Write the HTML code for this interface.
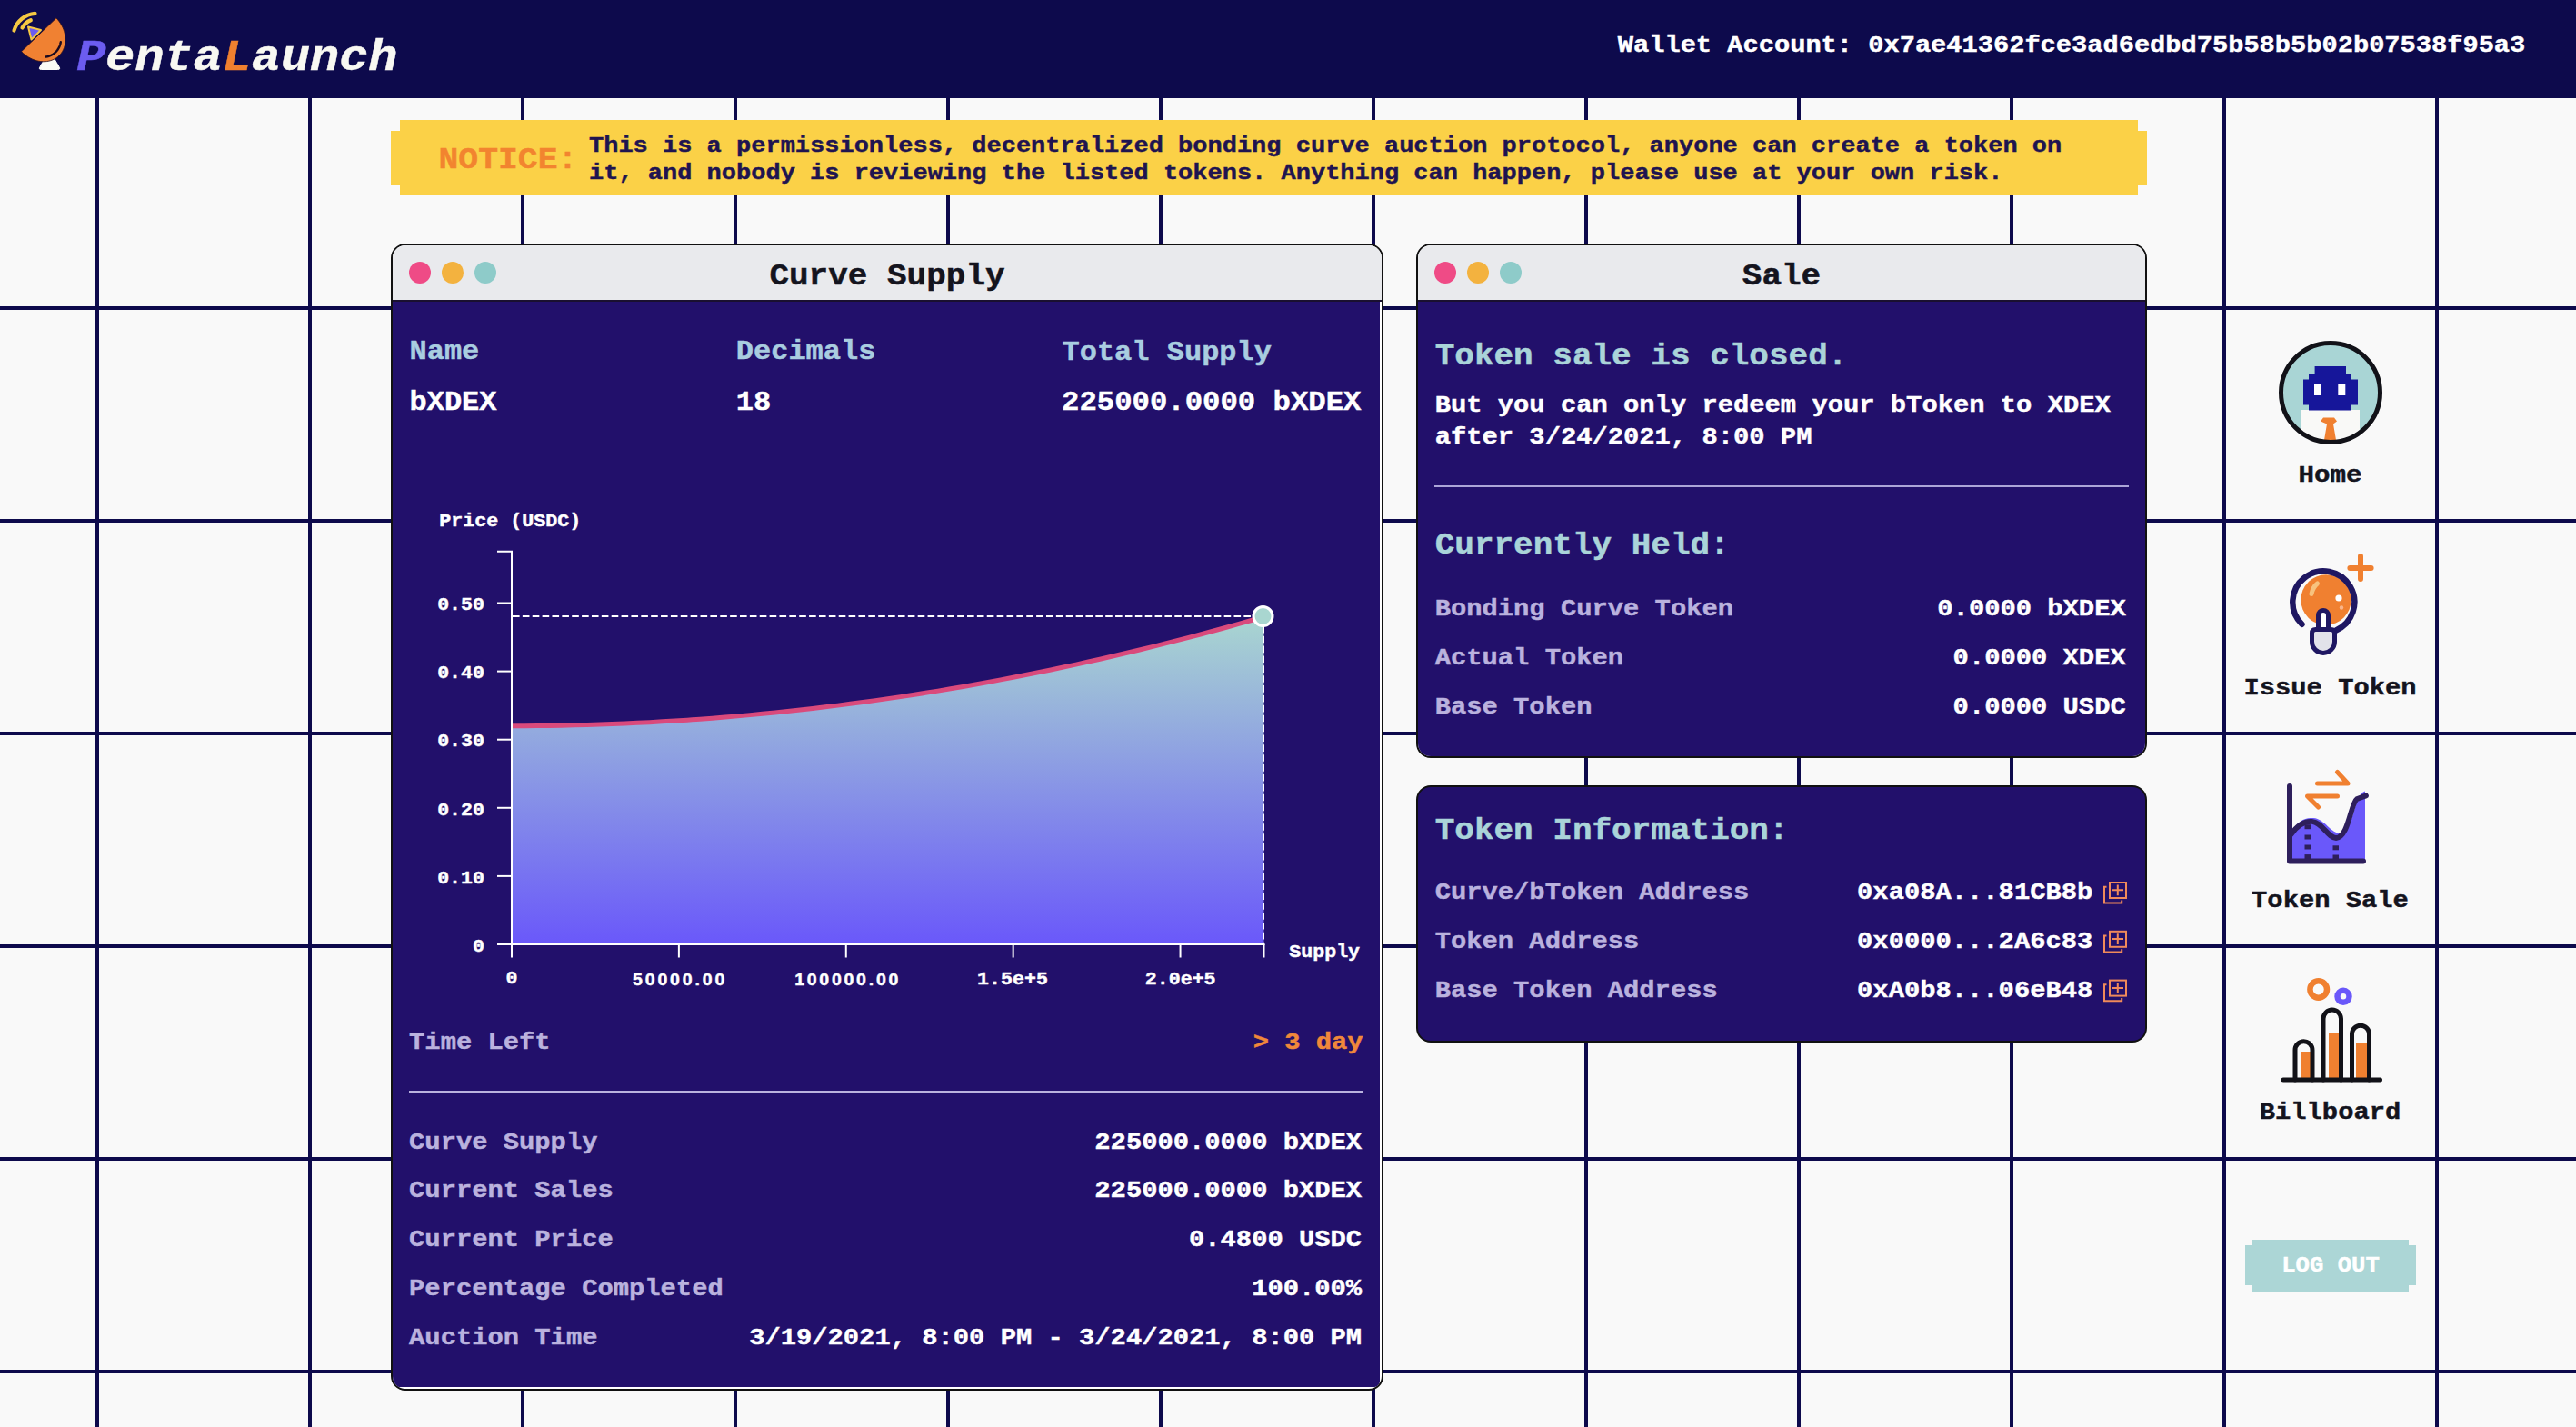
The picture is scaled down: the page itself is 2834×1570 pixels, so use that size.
<!DOCTYPE html>
<html><head><meta charset="utf-8"><style>
html,body{margin:0;padding:0;}
body{width:2834px;height:1570px;overflow:hidden;position:relative;background-color:#f9f9f9;
background-image:linear-gradient(to right,#0d0a4c 4px,transparent 4px),linear-gradient(to bottom,#0d0a4c 4px,transparent 4px);
background-size:234px 234px;background-position:105px 103px;font-family:"Liberation Mono", monospace;}
.t{position:absolute;white-space:pre;line-height:1;transform:scaleY(0.9);transform-origin:0 0.766em;-webkit-text-stroke:0.5px currentColor;}
</style></head><body>
<div style='position:absolute;left:0px;top:0px;width:2834px;height:108px;background:#0d0a4c;'></div><div style='position:absolute;left:440px;top:132px;width:1912px;height:82px;background:#fbd147;'></div><div style='position:absolute;left:430px;top:144px;width:10px;height:60px;background:#fbd147;'></div><div style='position:absolute;left:2352px;top:144px;width:10px;height:60px;background:#fbd147;'></div><div class=t style='top:157.52px;font-size:36.4px;color:#f2842f;font-weight:bold;left:482.50px;'>NOTICE:</div><div class=t style='top:147.02px;font-size:27px;color:#1f1450;font-weight:bold;left:648.00px;'>This is a permissionless, decentralized bonding curve auction protocol, anyone can create a token on</div><div class=t style='top:177.12px;font-size:27px;color:#1f1450;font-weight:bold;left:648.00px;'>it, and nobody is reviewing the listed tokens. Anything can happen, please use at your own risk.</div><div class=t style='top:35.72px;font-size:53.5px;color:#f8f8f2;font-weight:bold;font-style:italic;left:84.20px;'><span style='color:#6c5cf0'>P</span>enta<span style='color:#f0802f'>L</span>aunch</div><div class=t style='top:35.62px;font-size:28.7px;color:#ffffff;font-weight:bold;left:1779.80px;'>Wallet Account: 0x7ae41362fce3ad6edbd75b58b5b02b07538f95a3</div><div style='position:absolute;left:430px;top:268px;width:1092px;height:1262px;box-sizing:border-box;border:2px solid #111;border-radius:16px;background:#fff;overflow:hidden'><div style='position:absolute;left:0;top:0;right:0;height:60px;background:#e9eaed;border-bottom:2px solid #1a1030'></div><div style='position:absolute;left:0;top:62px;right:2px;bottom:2px;background:#22106b;border-radius:0 0 6px 0'></div></div><div style='position:absolute;left:450px;top:288px;width:24px;height:24px;border-radius:50%;background:#ef4b86'></div><div style='position:absolute;left:486px;top:288px;width:24px;height:24px;border-radius:50%;background:#f3b23f'></div><div style='position:absolute;left:522px;top:288px;width:24px;height:24px;border-radius:50%;background:#8ecbc9'></div><div class=t style='top:285.92px;font-size:36px;color:#14141e;font-weight:bold;left:-24.00px;width:2000px;text-align:center;'>Curve Supply</div><div style='position:absolute;left:1558px;top:268px;width:804px;height:566px;box-sizing:border-box;border:2px solid #111;border-radius:16px;background:#fff;overflow:hidden'><div style='position:absolute;left:0;top:0;right:0;height:60px;background:#e9eaed;border-bottom:2px solid #1a1030'></div><div style='position:absolute;left:0;top:62px;right:0px;bottom:0px;background:#22106b;border-radius:0 0 0px 0'></div></div><div style='position:absolute;left:1578px;top:288px;width:24px;height:24px;border-radius:50%;background:#ef4b86'></div><div style='position:absolute;left:1614px;top:288px;width:24px;height:24px;border-radius:50%;background:#f3b23f'></div><div style='position:absolute;left:1650px;top:288px;width:24px;height:24px;border-radius:50%;background:#8ecbc9'></div><div class=t style='top:285.92px;font-size:36px;color:#14141e;font-weight:bold;left:960.00px;width:2000px;text-align:center;'>Sale</div><div style='position:absolute;left:1558px;top:864px;width:804px;height:283px;box-sizing:border-box;border:2px solid #111;border-radius:16px;background:#22106b'></div><div class=t style='top:371.49px;font-size:32px;color:#a9cde0;font-weight:bold;left:450.50px;'>Name</div><div class=t style='top:371.49px;font-size:32px;color:#a9cde0;font-weight:bold;left:809.80px;'>Decimals</div><div class=t style='top:371.99px;font-size:32px;color:#a9cde0;font-weight:bold;left:1168.50px;'>Total Supply</div><div class=t style='top:427.39px;font-size:32px;color:#ffffff;font-weight:bold;left:450.50px;'>bXDEX</div><div class=t style='top:427.39px;font-size:32px;color:#ffffff;font-weight:bold;left:809.80px;'>18</div><div class=t style='top:427.16px;font-size:32.3px;color:#ffffff;font-weight:bold;right:1336.50px;'>225000.0000 bXDEX</div><div class=t style='top:1132.54px;font-size:28.8px;color:#bab2de;font-weight:bold;left:450.10px;'>Time Left</div><div class=t style='top:1132.54px;font-size:28.8px;color:#f0883a;font-weight:bold;right:1334.40px;'>&gt; 3 day</div><div style='position:absolute;left:450px;top:1199.5px;width:1050px;height:2px;background:#bab2de;'></div><div class=t style='top:1242.54px;font-size:28.8px;color:#bab2de;font-weight:bold;left:450.10px;'>Curve Supply</div><div class=t style='top:1242.54px;font-size:28.8px;color:#ffffff;font-weight:bold;right:1335.90px;'>225000.0000 bXDEX</div><div class=t style='top:1296.39px;font-size:28.8px;color:#bab2de;font-weight:bold;left:450.10px;'>Current Sales</div><div class=t style='top:1296.39px;font-size:28.8px;color:#ffffff;font-weight:bold;right:1335.90px;'>225000.0000 bXDEX</div><div class=t style='top:1350.24px;font-size:28.8px;color:#bab2de;font-weight:bold;left:450.10px;'>Current Price</div><div class=t style='top:1350.24px;font-size:28.8px;color:#ffffff;font-weight:bold;right:1335.90px;'>0.4800 USDC</div><div class=t style='top:1404.09px;font-size:28.8px;color:#bab2de;font-weight:bold;left:450.10px;'>Percentage Completed</div><div class=t style='top:1404.09px;font-size:28.8px;color:#ffffff;font-weight:bold;right:1335.90px;'>100.00%</div><div class=t style='top:1457.94px;font-size:28.8px;color:#bab2de;font-weight:bold;left:450.10px;'>Auction Time</div><div class=t style='top:1457.94px;font-size:28.8px;color:#ffffff;font-weight:bold;right:1335.90px;'>3/19/2021, 8:00 PM - 3/24/2021, 8:00 PM</div><div class=t style='top:374.12px;font-size:36px;color:#aad4d9;font-weight:bold;left:1578.70px;'>Token sale is closed.</div><div class=t style='top:431.54px;font-size:28.8px;color:#ffffff;font-weight:bold;left:1578.70px;'>But you can only redeem your bToken to XDEX</div><div class=t style='top:467.24px;font-size:28.8px;color:#ffffff;font-weight:bold;left:1578.70px;'>after 3/24/2021, 8:00 PM</div><div style='position:absolute;left:1578px;top:533.5px;width:764px;height:2px;background:#aca5d8;'></div><div class=t style='top:581.72px;font-size:36px;color:#aad4d9;font-weight:bold;left:1578.70px;'>Currently Held:</div><div class=t style='top:656.34px;font-size:28.8px;color:#bab2de;font-weight:bold;left:1578.70px;'>Bonding Curve Token</div><div class=t style='top:656.34px;font-size:28.8px;color:#ffffff;font-weight:bold;right:495.30px;'>0.0000 bXDEX</div><div class=t style='top:710.14px;font-size:28.8px;color:#bab2de;font-weight:bold;left:1578.70px;'>Actual Token</div><div class=t style='top:710.14px;font-size:28.8px;color:#ffffff;font-weight:bold;right:495.30px;'>0.0000 XDEX</div><div class=t style='top:763.94px;font-size:28.8px;color:#bab2de;font-weight:bold;left:1578.70px;'>Base Token</div><div class=t style='top:763.94px;font-size:28.8px;color:#ffffff;font-weight:bold;right:495.30px;'>0.0000 USDC</div><div class=t style='top:896.32px;font-size:36px;color:#aad4d9;font-weight:bold;left:1578.70px;'>Token Information:</div><div class=t style='top:967.94px;font-size:28.8px;color:#bab2de;font-weight:bold;left:1578.70px;'>Curve/bToken Address</div><div class=t style='top:967.94px;font-size:28.8px;color:#ffffff;font-weight:bold;right:531.70px;'>0xa08A...81CB8b</div><div class=t style='top:1021.74px;font-size:28.8px;color:#bab2de;font-weight:bold;left:1578.70px;'>Token Address</div><div class=t style='top:1021.74px;font-size:28.8px;color:#ffffff;font-weight:bold;right:531.70px;'>0x0000...2A6c83</div><div class=t style='top:1075.54px;font-size:28.8px;color:#bab2de;font-weight:bold;left:1578.70px;'>Base Token Address</div><div class=t style='top:1075.54px;font-size:28.8px;color:#ffffff;font-weight:bold;right:531.70px;'>0xA0b8...06eB48</div><div class=t style='top:507.83px;font-size:29.2px;color:#14141e;font-weight:bold;left:1563.50px;width:2000px;text-align:center;'>Home</div><div class=t style='top:742.54px;font-size:28.8px;color:#14141e;font-weight:bold;left:1563.50px;width:2000px;text-align:center;'>Issue Token</div><div class=t style='top:976.74px;font-size:28.8px;color:#14141e;font-weight:bold;left:1563.50px;width:2000px;text-align:center;'>Token Sale</div><div class=t style='top:1210.44px;font-size:28.8px;color:#14141e;font-weight:bold;left:1563.50px;width:2000px;text-align:center;'>Billboard</div><div style='position:absolute;left:2478px;top:1364px;width:172px;height:58px;background:#acd6d6;'></div><div style='position:absolute;left:2470px;top:1370px;width:188px;height:44px;background:#acd6d6;'></div><div class=t style='top:1380.39px;font-size:25.6px;color:#ffffff;font-weight:bold;left:1564.00px;width:2000px;text-align:center;'>LOG OUT</div><svg style="position:absolute;left:0;top:0" width="2834" height="1570" viewBox="0 0 2834 1570"><defs><linearGradient id="ag" x1="0" y1="0" x2="0" y2="1"><stop offset="0" stop-color="#a9d6d0"/><stop offset="1" stop-color="#6a58fa"/></linearGradient></defs><path d="M563.00,798.68 L576.79,798.65 L590.58,798.55 L604.38,798.38 L618.17,798.15 L631.96,797.85 L645.75,797.48 L659.54,797.04 L673.33,796.54 L687.12,795.98 L700.92,795.34 L714.71,794.64 L728.50,793.87 L742.29,793.04 L756.08,792.14 L769.88,791.17 L783.67,790.14 L797.46,789.03 L811.25,787.87 L825.04,786.63 L838.83,785.33 L852.62,783.96 L866.42,782.53 L880.21,781.02 L894.00,779.45 L907.79,777.82 L921.58,776.12 L935.38,774.35 L949.17,772.51 L962.96,770.61 L976.75,768.64 L990.54,766.60 L1004.33,764.50 L1018.12,762.33 L1031.92,760.10 L1045.71,757.79 L1059.50,755.42 L1073.29,752.99 L1087.08,750.48 L1100.88,747.91 L1114.67,745.28 L1128.46,742.57 L1142.25,739.80 L1156.04,736.96 L1169.83,734.06 L1183.62,731.09 L1197.42,728.05 L1211.21,724.95 L1225.00,721.78 L1238.79,718.54 L1252.58,715.24 L1266.38,711.86 L1280.17,708.43 L1293.96,704.92 L1307.75,701.35 L1321.54,697.71 L1335.33,694.01 L1349.12,690.24 L1362.92,686.40 L1376.71,682.49 L1390.50,678.52 L1390.50,1039 L563,1039 Z" fill="url(#ag)"/><path d="M563.00,798.68 L576.79,798.65 L590.58,798.55 L604.38,798.38 L618.17,798.15 L631.96,797.85 L645.75,797.48 L659.54,797.04 L673.33,796.54 L687.12,795.98 L700.92,795.34 L714.71,794.64 L728.50,793.87 L742.29,793.04 L756.08,792.14 L769.88,791.17 L783.67,790.14 L797.46,789.03 L811.25,787.87 L825.04,786.63 L838.83,785.33 L852.62,783.96 L866.42,782.53 L880.21,781.02 L894.00,779.45 L907.79,777.82 L921.58,776.12 L935.38,774.35 L949.17,772.51 L962.96,770.61 L976.75,768.64 L990.54,766.60 L1004.33,764.50 L1018.12,762.33 L1031.92,760.10 L1045.71,757.79 L1059.50,755.42 L1073.29,752.99 L1087.08,750.48 L1100.88,747.91 L1114.67,745.28 L1128.46,742.57 L1142.25,739.80 L1156.04,736.96 L1169.83,734.06 L1183.62,731.09 L1197.42,728.05 L1211.21,724.95 L1225.00,721.78 L1238.79,718.54 L1252.58,715.24 L1266.38,711.86 L1280.17,708.43 L1293.96,704.92 L1307.75,701.35 L1321.54,697.71 L1335.33,694.01 L1349.12,690.24 L1362.92,686.40 L1376.71,682.49 L1390.50,678.52" fill="none" stroke="#d94a7c" stroke-width="5"/><line x1="564" y1="678" x2="1390" y2="678" stroke="#fff" stroke-width="2" stroke-dasharray="7.6 3.27"/><line x1="1390" y1="678" x2="1390" y2="1039" stroke="#fff" stroke-width="2" stroke-dasharray="7.6 3.27"/><path d="M547,606.8 H563 V1039 M547,1039 H1391.5" fill="none" stroke="#fff" stroke-width="2"/><line x1="547" y1="663.50" x2="563" y2="663.50" stroke="#fff" stroke-width="2"/><line x1="547" y1="738.60" x2="563" y2="738.60" stroke="#fff" stroke-width="2"/><line x1="547" y1="813.70" x2="563" y2="813.70" stroke="#fff" stroke-width="2"/><line x1="547" y1="888.80" x2="563" y2="888.80" stroke="#fff" stroke-width="2"/><line x1="547" y1="963.90" x2="563" y2="963.90" stroke="#fff" stroke-width="2"/><line x1="563.00" y1="1039" x2="563.00" y2="1053.5" stroke="#fff" stroke-width="2"/><line x1="746.89" y1="1039" x2="746.89" y2="1053.5" stroke="#fff" stroke-width="2"/><line x1="930.78" y1="1039" x2="930.78" y2="1053.5" stroke="#fff" stroke-width="2"/><line x1="1114.67" y1="1039" x2="1114.67" y2="1053.5" stroke="#fff" stroke-width="2"/><line x1="1298.56" y1="1039" x2="1298.56" y2="1053.5" stroke="#fff" stroke-width="2"/><line x1="1390.50" y1="1039" x2="1390.50" y2="1053.5" stroke="#fff" stroke-width="2"/><circle cx="1389.5" cy="678" r="10.5" fill="#a9d6d0" stroke="#fff" stroke-width="3"/><g fill="none" stroke="#f5c842" stroke-width="4.2" stroke-linecap="round"><path d="M15.5,33.5 A26,26 0 0 1 38.5,14.8"/><path d="M24.5,30.5 A18,18 0 0 1 33.8,22.2"/></g><path d="M31,29.5 L45,33 L34.5,43.5 Z" fill="#6c5cf0" stroke="#f5c842" stroke-width="2" stroke-linejoin="round"/><path d="M57,60 L65,73.5 Q67,76.5 63.5,76.5 L45.5,76.5 Q42,76.5 44,73.5 L52,60 Z" fill="#fbfbf5" stroke="#fbfbf5" stroke-width="1" stroke-linejoin="round"/><path d="M61.94,19.85 L63.62,21.71 L65.17,23.68 L66.58,25.74 L67.84,27.88 L68.95,30.08 L69.90,32.33 L70.68,34.62 L71.29,36.93 L71.72,39.25 L71.97,41.56 L72.05,43.85 L71.94,46.11 L71.65,48.32 L71.19,50.46 L70.55,52.53 L69.74,54.52 L68.76,56.40 L67.62,58.17 L66.33,59.82 L64.89,61.33 L63.32,62.71 L61.62,63.93 L59.80,64.99 L57.88,65.89 L55.86,66.62 L53.77,67.17 L51.60,67.55 L49.38,67.74 L47.12,67.76 L44.84,67.59 L42.54,67.24 L40.24,66.71 L37.96,66.00 L35.70,65.13 L33.49,64.09 L31.34,62.89 L29.26,61.54 L27.26,60.04 L25.36,58.41 L23.56,56.65 Z" fill="#f08132" stroke="#2a1020" stroke-width="0.8" stroke-linejoin="round"/><path d="M66.82,46.12 L66.59,47.38 L66.29,48.62 L65.92,49.82 L65.48,50.99 L64.97,52.13 L64.39,53.21 L63.75,54.26 L63.05,55.25 L62.28,56.20 L61.45,57.09 L60.57,57.92 L59.63,58.70 L58.65,59.41 L57.61,60.05 L56.53,60.64 L55.41,61.15 L54.25,61.59 L53.05,61.97 L51.83,62.27 L50.57,62.50" fill="none" stroke="#1a0a20" stroke-width="2.4" stroke-linecap="round"/><g fill="none" stroke="#f08a5a" stroke-width="2" transform="translate(0,0.00)"><rect x="2321" y="971" width="18" height="17"/><path d="M2323.5,979.3 H2336 M2329.8,973.5 V985.3"/><path d="M2317.5,975.7 H2315 V993.6 H2334.2 V990.5"/></g><g fill="none" stroke="#f08a5a" stroke-width="2" transform="translate(0,53.80)"><rect x="2321" y="971" width="18" height="17"/><path d="M2323.5,979.3 H2336 M2329.8,973.5 V985.3"/><path d="M2317.5,975.7 H2315 V993.6 H2334.2 V990.5"/></g><g fill="none" stroke="#f08a5a" stroke-width="2" transform="translate(0,107.60)"><rect x="2321" y="971" width="18" height="17"/><path d="M2323.5,979.3 H2336 M2329.8,973.5 V985.3"/><path d="M2317.5,975.7 H2315 V993.6 H2334.2 V990.5"/></g><defs><clipPath id="hc"><circle cx="2564" cy="432" r="53"/></clipPath></defs><circle cx="2564" cy="432" r="54.5" fill="#a9d5d5"/><g clip-path="url(#hc)"><rect x="2532" y="451" width="64" height="45" fill="#f9f9f7"/><path d="M2546.6,403 H2581 V411 H2587 V417.4 H2594 V445.6 H2587 V451.5 H2540 V445.6 H2534 V417.4 H2540 V411 H2546.6 Z" fill="#16169a"/><rect x="2546" y="422" width="8" height="13" fill="#fff"/><rect x="2572.3" y="422" width="8" height="13" fill="#fff"/><path d="M2556,459.5 H2568 L2571,463.5 L2567,466.5 L2570,484 H2557 L2560,466.5 L2553,463.5 Z" fill="#f08030"/></g><circle cx="2564" cy="432" r="54.5" fill="none" stroke="#121218" stroke-width="5"/><circle cx="2559" cy="660" r="27.7" fill="#f08030"/><path d="M2532.5,686.7 A34,34 0 1 1 2569.6,693.7" fill="none" stroke="#1f1762" stroke-width="6.5" stroke-linecap="round"/><path d="M2543,653.5 Q2544.5,646 2549.5,642" fill="none" stroke="#f7c27e" stroke-width="5" stroke-linecap="round"/><circle cx="2573" cy="658" r="3.6" fill="#fff"/><circle cx="2576" cy="668.5" r="2.2" fill="#f9b58a"/><rect x="2550.5" y="671.5" width="11" height="26" rx="5.5" fill="#fff" stroke="#1f1762" stroke-width="5"/><path d="M2547.5,692.5 H2564.5 Q2568.5,692.5 2568.5,696.5 V706 A12.5,12.5 0 0 1 2543.5,706 V696.5 Q2543.5,692.5 2547.5,692.5 Z" fill="#e2e2ea" stroke="#1f1762" stroke-width="5" stroke-linejoin="round"/><path d="M2585.4,625 H2608.6 M2597,612 V637" fill="none" stroke="#f08030" stroke-width="6" stroke-linecap="round"/><path d="M2521,947 V915 C2528,903 2536,899.5 2545,900 C2558,901 2564,917 2575,917 C2590,915 2589,874 2602,870.5 V947 Z" fill="#6a58fa"/><path d="M2520.5,918 C2528,907 2536,903.5 2543.5,903.8 C2555,904.5 2561,922 2570,922 C2584,921 2586,884 2593,879 L2603,875.5" fill="none" stroke="#2e1f5c" stroke-width="5.8" stroke-linecap="round"/><rect x="2535.5" y="907.2" width="6.5" height="5" fill="#2e1f5c"/><rect x="2535.5" y="918.5" width="6.5" height="5" fill="#2e1f5c"/><rect x="2535.5" y="929.5" width="6.5" height="5" fill="#2e1f5c"/><rect x="2535.5" y="940.1" width="6.5" height="5" fill="#2e1f5c"/><rect x="2566.5" y="930.3" width="6.5" height="5" fill="#2e1f5c"/><rect x="2566.5" y="940.5" width="6.5" height="5" fill="#2e1f5c"/><path d="M2519,865 V947.5 H2600" fill="none" stroke="#2e1f5c" stroke-width="6" stroke-linecap="round" stroke-linejoin="round"/><path d="M2549.5,862 H2583 L2571.5,849.5 M2571.5,876 H2538.5 L2550.5,888" fill="none" stroke="#f08030" stroke-width="5" stroke-linecap="round" stroke-linejoin="round"/><g fill="#f08030"><rect x="2531" y="1157" width="11" height="31"/><rect x="2562" y="1136" width="11" height="52"/><rect x="2592" y="1148" width="12" height="40"/></g><g fill="none" stroke="#121218" stroke-width="5" stroke-linecap="round"><path d="M2525,1188 V1155.2 A9.5,9.5 0 0 1 2544,1155.2 V1188"/><path d="M2556,1188 V1120.8 A9.75,9.75 0 0 1 2575.5,1120.8 V1188"/><path d="M2587.5,1188 V1137.7 A9.5,9.5 0 0 1 2606.5,1137.7 V1188"/><path d="M2512,1188 H2618.5"/></g><circle cx="2550.7" cy="1088.5" r="9.3" fill="none" stroke="#f08030" stroke-width="6.5"/><circle cx="2578" cy="1096.3" r="6.5" fill="none" stroke="#6a58fa" stroke-width="6.5"/></svg><div class=t style='top:655.25px;font-size:21.6px;color:#fff;font-weight:bold;right:2301.00px;'>0.50</div><div class=t style='top:730.35px;font-size:21.6px;color:#fff;font-weight:bold;right:2301.00px;'>0.40</div><div class=t style='top:805.45px;font-size:21.6px;color:#fff;font-weight:bold;right:2301.00px;'>0.30</div><div class=t style='top:880.55px;font-size:21.6px;color:#fff;font-weight:bold;right:2301.00px;'>0.20</div><div class=t style='top:955.65px;font-size:21.6px;color:#fff;font-weight:bold;right:2301.00px;'>0.10</div><div class=t style='top:1030.75px;font-size:21.6px;color:#fff;font-weight:bold;right:2301.00px;'>0</div><div class=t style='top:563.18px;font-size:21.7px;color:#fff;font-weight:bold;left:483.20px;'>Price (USDC)</div><div class=t style='top:1037.45px;font-size:21.6px;color:#fff;font-weight:bold;left:1418.30px;'>Supply</div><div class=t style='top:1066.45px;font-size:21.6px;color:#fff;font-weight:bold;left:-437.00px;width:2000px;text-align:center;'>0</div><div class=t style='top:1066.75px;font-size:21.6px;color:#fff;font-weight:bold;left:114.00px;width:2000px;text-align:center;'>1.5e+5</div><div class=t style='top:1066.75px;font-size:21.6px;color:#fff;font-weight:bold;left:298.70px;width:2000px;text-align:center;'>2.0e+5</div><div class=t style='top:1067.56px;font-size:19.5px;color:#fff;font-weight:bold;font-family:"Liberation Sans", sans-serif;left:-251.90px;width:2000px;text-align:center;letter-spacing:2.85px;'>50000.00</div><div class=t style='top:1067.56px;font-size:19.5px;color:#fff;font-weight:bold;font-family:"Liberation Sans", sans-serif;left:-67.40px;width:2000px;text-align:center;letter-spacing:2.75px;'>100000.00</div>
</body></html>
